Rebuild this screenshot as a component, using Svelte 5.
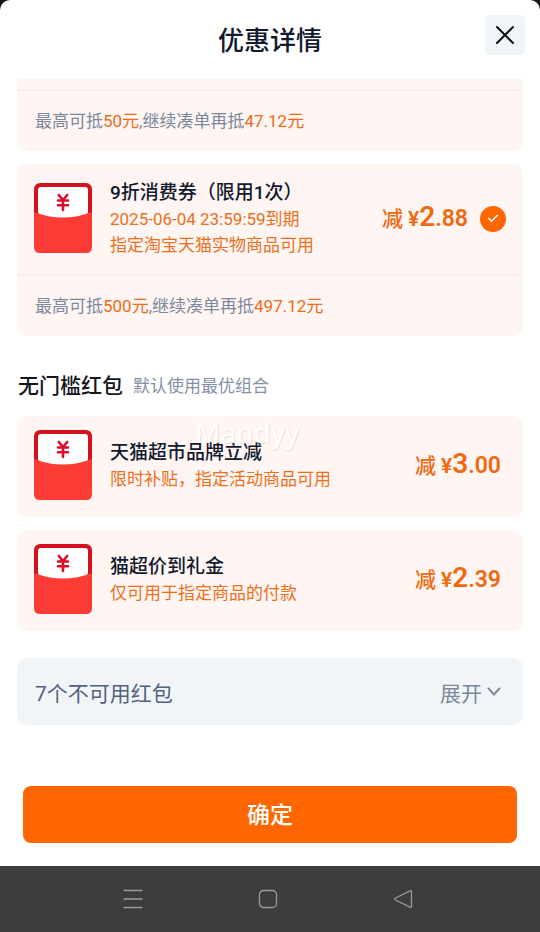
<script>
  let expanded = $state(false);
  let selected = $state(true);

  const redPackets = [
    { title: '天猫超市品牌立减', note: '限时补贴，指定活动商品可用', whole: '3', cents: '.00' },
    { title: '猫超价到礼金', note: '仅可用于指定商品的付款', whole: '2', cents: '.39' }
  ];
</script>

{#snippet envelope()}
  <svg class="envelope" viewBox="0 0 58 70" aria-hidden="true">
    <rect x="0" y="0" width="58" height="60" rx="6" fill="#d5101f" />
    <path d="M4 29V7Q4 4 7 4H51Q54 4 54 7V29L50 40H8Z" fill="#fff" />
    <path d="M0 29Q29 40 58 29V64Q58 70 52 70H6Q0 70 0 64Z" fill="#ff3b35" />
    <path
      d="M24.8 12L29 17L33.2 12M24 17.5H34M24 22.3H34M29 18V27"
      fill="none"
      stroke="#dc0c2c"
      stroke-width="2.600"
      stroke-linecap="round"
      stroke-linejoin="round"
    />
  </svg>
{/snippet}

{#snippet price(whole, cents)}
  <div class="price">
    <span class="minus">减</span>
    <p><span class="yen">¥</span><span class="whole">{whole}</span><span class="cents">{cents}</span></p>
  </div>
{/snippet}

<div class="screen">
  <main class="sheet">
    <header>
      <h1>优惠详情</h1>
      <button class="close" type="button" aria-label="关闭">
        <svg width="20" height="20" viewBox="0 0 20 20" aria-hidden="true">
          <path d="M2 2L18 18M18 2L2 18" stroke="#0d0f14" stroke-width="2" stroke-linecap="round" />
        </svg>
      </button>
    </header>

    <div class="list">
      <section class="card cut">
        <p class="tip">最高可抵<em>50元</em>,继续凑单再抵<em>47.12元</em></p>
      </section>

      <section class="card">
        <div class="row tall">
          {@render envelope()}
          <div class="info">
            <h3>9折消费券（限用1次）</h3>
            <p>2025-06-04 23:59:59到期</p>
            <p>指定淘宝天猫实物商品可用</p>
          </div>
          {@render price('2', '.88')}
          <input class="check" type="checkbox" aria-label="使用9折消费券" bind:checked={selected} />
        </div>
        <p class="tip">最高可抵<em>500元</em>,继续凑单再抵<em>497.12元</em></p>
      </section>

      <div class="group">
        <h2>无门槛红包</h2>
        <span>默认使用最优组合</span>
      </div>

      <div class="packets">
        {#each redPackets as item}
          <section class="card">
            <div class="row short">
              {@render envelope()}
              <div class="info">
                <h3>{item.title}</h3>
                <p>{item.note}</p>
              </div>
              {@render price(item.whole, item.cents)}
            </div>
          </section>
        {/each}
        <span class="watermark">Mandyy</span>
      </div>

      <button class="more" type="button" aria-expanded={expanded} onclick={() => (expanded = !expanded)}>
        <span>7个不可用红包</span>
        <span class="toggle">
          展开
          <svg width="14" height="10" viewBox="0 0 14 10" aria-hidden="true">
            <path d="M1.500 1.500L7 7.500L12.500 1.500" fill="none" stroke="#7c889b" stroke-width="2" stroke-linecap="round" />
          </svg>
        </span>
      </button>
    </div>

    <footer>
      <button class="confirm" type="button">确定</button>
    </footer>
  </main>

  <nav aria-label="系统导航">
    <button type="button" aria-label="最近任务">
      <svg width="20" height="20" viewBox="0 0 20 20" aria-hidden="true"><path d="M1 1.500H19M1 10H19M1 18.500H19" /></svg>
    </button>
    <button type="button" aria-label="主屏幕">
      <svg width="20" height="20" viewBox="0 0 20 20" aria-hidden="true"><rect x="1.500" y="1.500" width="17" height="17" rx="4" /></svg>
    </button>
    <button type="button" aria-label="返回">
      <svg width="20" height="20" viewBox="0 0 20 20" aria-hidden="true"><path d="M17 1.800Q18.500 1 18.500 2.800V17.200Q18.500 19 17 18.200L2.500 11Q1 10 2.500 9Z" /></svg>
    </button>
  </nav>
</div>

<style>
  :global(body) {
    background: #171717;
  }

  .screen {
    min-height: 100vh;
    display: flex;
    flex-direction: column;
    font-family: Roboto, 'Noto Sans CJK SC', sans-serif;
    color: #111a2e;
  }

  h1, h2, h3, p {
    margin: 0;
    font-weight: 500;
  }

  button {
    font: inherit;
    color: inherit;
    border: 0;
    padding: 0;
    background: none;
    cursor: pointer;
  }

  .sheet {
    flex: 1;
    display: flex;
    flex-direction: column;
    background: #fff;
    border-radius: 10px 10px 0 0;
  }

  header {
    display: grid;
    grid-template-columns: 40px 1fr 40px;
    padding: 15px 15px 24px;
  }

  h1 {
    grid-column: 2;
    text-align: center;
    font-size: 26px;
    line-height: 52px;
    height: 40px;
  }

  .close {
    display: grid;
    place-items: center;
    height: 40px;
    border-radius: 5px;
    background: #f0f5f8;
  }

  .list {
    padding: 0 17px;
  }

  .card {
    background: #fff5f2;
    border-radius: 10px;
    margin-bottom: 13px;
  }

  .cut {
    padding-top: 10px;
    border-radius: 0 0 10px 10px;
  }

  .tip {
    padding: 0 18px;
    border-top: 2px solid #faedea;
    font-size: 17px;
    font-weight: 400;
    line-height: 60px;
    color: #7c889e;
  }

  em {
    font-style: normal;
    color: #ee6b17;
  }

  .row {
    display: flex;
    align-items: center;
    box-sizing: border-box;
    padding: 0 17px;
  }

  .tall {
    height: 110px;
  }

  .tall .envelope {
    margin-bottom: 2px;
  }

  .short {
    height: 101px;
    padding: 0 22px 2px 17px;
  }

  .envelope {
    width: 58px;
    height: 70px;
    flex: none;
    margin-right: 18px;
  }

  .short .envelope {
    margin-bottom: 2px;
  }

  .info {
    flex: 1;
  }

  h3 {
    font-size: 19px;
    line-height: 26px;
  }

  .info p {
    font-size: 17px;
    font-weight: 400;
    line-height: 26px;
    color: #ea701d;
  }

  .price {
    display: flex;
    align-items: center;
    gap: 5px;
    color: #f0690f;
    line-height: 32px;
    font-weight: 500;
  }

  .price p {
    font-weight: 600;
  }

  .minus {
    font-size: 21px;
  }

  .yen {
    font-size: 21px;
  }

  .whole {
    font-size: 28px;
  }

  .cents {
    font-size: 23px;
  }

  .check {
    appearance: none;
    width: 26px;
    height: 26px;
    margin: 0 0 0 12px;
    border-radius: 50%;
    border: 2px solid #ff6600;
    display: grid;
    place-items: center;
  }

  .check:checked {
    background: #ff6600;
  }

  .check:checked::before {
    content: '';
    width: 8px;
    height: 4px;
    border: solid #fff;
    border-width: 0 0 2px 2px;
    border-radius: 1px;
    transform: rotate(-45deg);
    margin-bottom: 4px;
  }

  .group {
    display: flex;
    align-items: center;
    gap: 10px;
    padding: 22px 1px 15px;
    line-height: 30px;
  }

  h2 {
    font-size: 21px;
    color: #15171c;
  }

  .group span {
    font-size: 17px;
    color: #8490a5;
  }

  .packets {
    position: relative;
  }

  .watermark {
    position: absolute;
    left: 178px;
    top: 0;
    font: 28px/32px 'Noto Sans', sans-serif;
    color: #fff;
    text-shadow: 1px 1px 1px rgb(120 110 110 / 16%);
    pointer-events: none;
  }

  .more {
    display: flex;
    justify-content: space-between;
    align-items: center;
    width: 100%;
    height: 67px;
    margin-top: 27px;
    padding: 0 22px 0 18px;
    border-radius: 10px;
    background: #f1f5f8;
    font-size: 21px;
    color: #53617e;
  }

  .toggle {
    display: flex;
    align-items: center;
    gap: 5px;
    color: #7c889b;
  }

  footer {
    margin-top: auto;
    padding: 40px 23px 23px;
  }

  .confirm {
    width: 100%;
    height: 57px;
    padding-bottom: 4px;
    border-radius: 8px;
    background: #ff6600;
    color: #fff;
    font-size: 23px;
    font-weight: 500;
  }

  nav {
    display: flex;
    justify-content: space-around;
    align-items: center;
    height: 66px;
    padding: 0 70px 0 65px;
    background: #3d3d3d;
  }

  nav button {
    display: grid;
    place-items: center;
    width: 20px;
    height: 40px;
  }

  nav svg {
    fill: none;
    stroke: #9a9a9a;
    stroke-width: 1.300;
    stroke-linecap: round;
  }
</style>
